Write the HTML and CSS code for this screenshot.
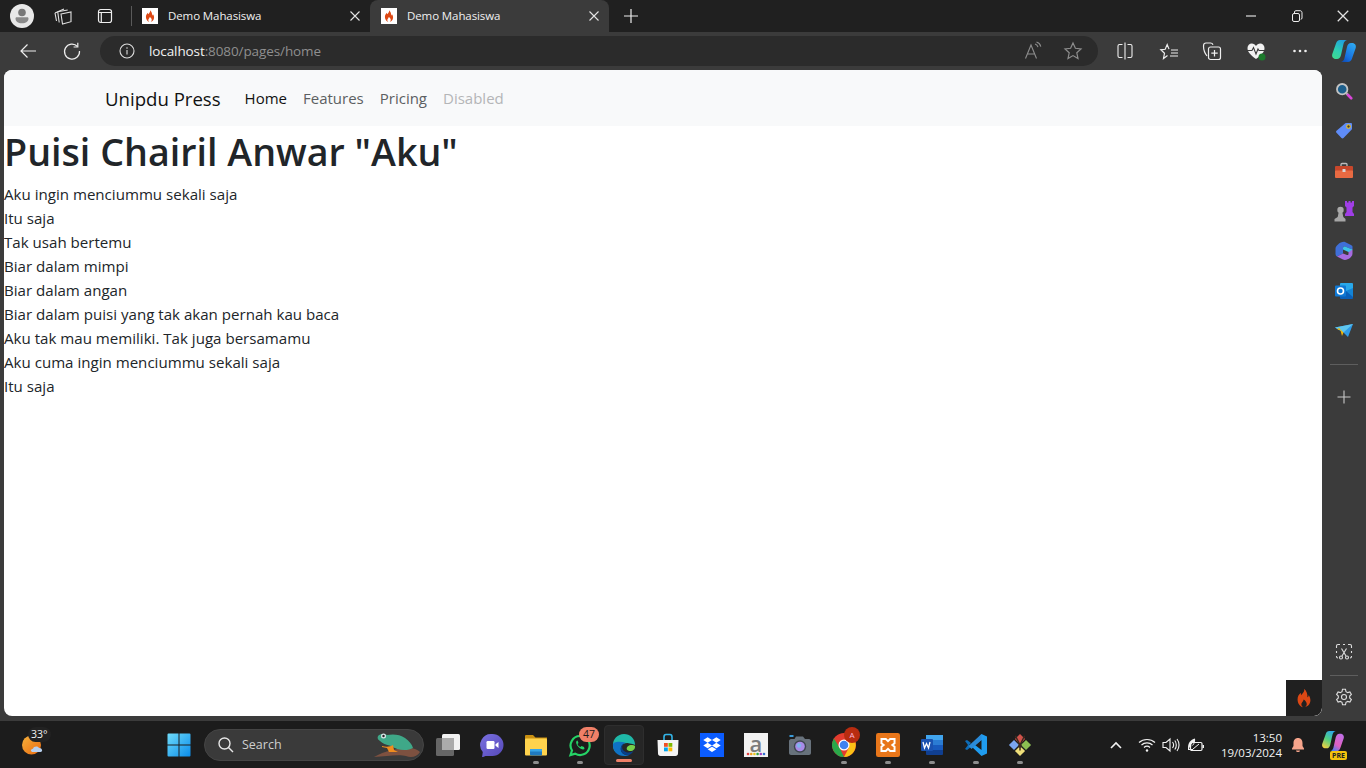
FILE: index.html
```html
<!DOCTYPE html>
<html lang="id">
<head>
<meta charset="utf-8">
<title>Demo Mahasiswa</title>
<link rel="stylesheet" href="styles.css">
</head>
<body>
<svg class="defs" width="0" height="0" aria-hidden="true">
  <defs>
    <linearGradient id="gLeft" x1="0.700" y1="0" x2="0.200" y2="1"><stop offset="0" stop-color="#1f9fe0"/><stop offset="0.600" stop-color="#2fd0b0"/><stop offset="1" stop-color="#3fd890"/></linearGradient>
    <linearGradient id="gRight" x1="0.800" y1="0" x2="0.200" y2="1"><stop offset="0" stop-color="#2ea8f0"/><stop offset="0.700" stop-color="#1670e0"/><stop offset="1" stop-color="#0f4fb8"/></linearGradient>
    <linearGradient id="gPreL" x1="0.700" y1="0" x2="0.200" y2="1"><stop offset="0" stop-color="#2fa8e8"/><stop offset="0.500" stop-color="#52d080"/><stop offset="1" stop-color="#f4d040"/></linearGradient>
    <linearGradient id="gPreR" x1="0.800" y1="0" x2="0.200" y2="1"><stop offset="0" stop-color="#c070e8"/><stop offset="0.600" stop-color="#e060c0"/><stop offset="1" stop-color="#4080f0"/></linearGradient>
    <linearGradient id="gMeet" x1="0" y1="0" x2="1" y2="1"><stop offset="0" stop-color="#7a70e0"/><stop offset="1" stop-color="#5548b8"/></linearGradient>
    <linearGradient id="gSun" x1="0" y1="0" x2="1" y2="1"><stop offset="0" stop-color="#f6b23c"/><stop offset="1" stop-color="#ea6a10"/></linearGradient>
    <linearGradient id="gStart" x1="0" y1="0" x2="1" y2="1"><stop offset="0" stop-color="#6fdcfa"/><stop offset="1" stop-color="#0a8cea"/></linearGradient>
  </defs>
  <symbol id="flame" viewBox="0 0 24 24"><path d="M12 2c1 3-1 4-3 7-.5-1-.6-1.600-.4-2.600C6 8.500 5 11 5 13.500 5 18 8 21.500 11 22c-2-1.500-2.500-3.500-1-5.500.6-.8 1.400-1.600 1.600-3 1.800 1 3.400 3 3.400 5 0 1.500-.6 2.700-2 3.500 3-.5 6-3.500 6-7.500 0-2.500-1-4.500-2-5.500 0 1-.3 1.800-1.300 2.300C16 8 15 4.500 12 2z" fill="#dd4814"/></symbol>
  <symbol id="x" viewBox="0 0 12 12"><path d="M1.500 1.500l9 9M10.500 1.500l-9 9" stroke="#e4e4e4" stroke-width="1.100" fill="none"/></symbol>
</svg>

<header class="tabstrip">
  <span class="strip-btn avatar-cell">
    <svg width="24" height="24" viewBox="0 0 24 24"><circle cx="12" cy="12" r="12" fill="#e8e8e8"/><circle cx="12" cy="8.500" r="3.800" fill="#777"/><path d="M5.500 14.500c0-.8.6-1.300 1.300-1.300h10.400c.7 0 1.300.5 1.300 1.300 0 2.800-2.500 4.800-6.500 4.800s-6.500-2-6.500-4.800z" fill="#8a8a8a"/></svg>
  </span>
  <span class="strip-btn">
    <svg width="20" height="20" viewBox="0 0 20 20" fill="none" stroke="#e0e0e0" stroke-width="1.100"><path d="M8 8l10-2v9.700L9.500 18z"/><path d="M4.700 5.700l10-1.700M4.700 5.700L6.200 16.500"/><path d="M2 7l9-4M2 7l1.500 8"/></svg>
  </span>
  <span class="strip-btn">
    <svg width="20" height="20" viewBox="0 0 20 20" fill="none" stroke="#eee" stroke-width="1.200"><rect x="3.500" y="3.500" width="13" height="13" rx="2.200"/><path d="M3.500 6.500h13M6.300 6.500v10"/></svg>
  </span>
  <span class="strip-sep"></span>
  <div class="tab">
    <span class="favicon"><svg width="14" height="14"><use href="#flame"/></svg></span>
    <span class="tab-title">Demo Mahasiswa</span>
    <svg class="tab-x" width="12" height="12"><use href="#x"/></svg>
  </div>
  <div class="tab tab-active">
    <span class="favicon"><svg width="14" height="14"><use href="#flame"/></svg></span>
    <span class="tab-title">Demo Mahasiswa</span>
    <svg class="tab-x" width="12" height="12"><use href="#x"/></svg>
  </div>
  <span class="new-tab">
    <svg width="16" height="16" viewBox="0 0 16 16"><path d="M8 1v14M1 8h14" stroke="#eee" stroke-width="1.200"/></svg>
  </span>
  <div class="win-controls">
    <span class="win-btn"><svg width="12" height="12" viewBox="0 0 12 12"><path d="M1 6h10" stroke="#eee" stroke-width="1.100"/></svg></span>
    <span class="win-btn"><svg width="12" height="12" viewBox="0 0 12 12" fill="none" stroke="#eee"><rect x="1.500" y="3.500" width="7" height="8" rx="1.500"/><path d="M3.500 3V2c0-.8.5-1.300 1.300-1.300H9c1.200 0 2 .8 2 2V8c0 .8-.5 1.300-1.300 1.300"/></svg></span>
    <span class="win-btn"><svg width="14" height="14" viewBox="0 0 12 12"><use href="#x"/></svg></span>
  </div>
</header>

<nav class="toolbar">
  <span class="tool-btn tool-back">
    <svg width="20" height="20" viewBox="0 0 20 20" fill="none" stroke="#eee" stroke-width="1.200"><path d="M18 10H3M9.500 3.500L3 10l6.500 6.500"/></svg>
  </span>
  <span class="tool-btn">
    <svg width="20" height="20" viewBox="0 0 20 20" fill="none" stroke="#eee" stroke-width="1.200"><path d="M15.500 5.500A7.500 7.500 0 1 0 17.500 10"/><path d="M15.800 1.800v4.200h-4.200"/></svg>
  </span>
  <div class="address">
    <svg class="addr-info" width="16" height="16" viewBox="0 0 16 16" fill="none" stroke="#ddd" stroke-width="1.100"><circle cx="8" cy="8" r="7"/><path d="M8 7v4.500M8 4.300v1.400"/></svg>
    <span class="url"><span class="url-host">localhost</span>:8080/pages/home</span>
    <span class="addr-actions">
      <svg width="20" height="20" viewBox="0 0 20 20" fill="none" stroke="#8d8d8d" stroke-width="1.100"><path d="M2.500 17.500L8 4l5.500 13.500M4.500 13h7"/><path d="M12 3c1.600.5 2.600 1.600 3 3.200M13.500 1c2.400.7 3.800 2.300 4.300 4.700"/></svg>
      <svg width="20" height="20" viewBox="0 0 20 20" fill="none" stroke="#8d8d8d" stroke-width="1.200"><path d="M10 2l2.400 5.300 5.600.6-4.200 3.900 1.200 5.700-5-2.900-5 2.900 1.200-5.700L2 7.900l5.600-.6z"/></svg>
    </span>
  </div>
  <div class="tool-right">
    <span class="tool-btn tr-btn"><svg width="20" height="20" viewBox="0 0 20 20" fill="none" stroke="#eee" stroke-width="1.100"><path d="M7.500 3.500H4.500A1.500 1.500 0 0 0 3 5v10a1.500 1.500 0 0 0 1.500 1.500h3M12.500 3.500h3A1.500 1.500 0 0 1 17 5v10a1.500 1.500 0 0 1-1.500 1.500h-3M10 1.500v17"/></svg></span>
    <span class="tool-btn tr-btn"><svg width="20" height="20" viewBox="0 0 20 20" fill="none" stroke="#eee" stroke-width="1.200"><path d="M8.500 14.500L4.500 17.500l1-5.200L1.800 8.800l4.400-.5L8.200 3.500l1.800 4.600M12 9h7M12 12h7M11 15h8"/></svg></span>
    <span class="tool-btn tr-btn"><svg width="22" height="22" viewBox="0 0 22 22" fill="none" stroke="#eee" stroke-width="1.200"><path d="M6 16C4 13.500 2.500 10 2.500 6c0-2 1-3 2.500-3h4.500c1.200 0 2 .5 2.500 1.800"/><rect x="7.500" y="7" width="12" height="12.500" rx="2"/><path d="M13.500 10v6.500M10.300 13.200h6.400"/></svg></span>
    <span class="tool-btn tr-btn"><svg width="22" height="22" viewBox="0 0 22 22"><path d="M11 19C5 14.500 2.500 12 2.500 8c0-2.500 2-4.500 4.300-4.500 1.800 0 3.300 1 4.200 2.500.9-1.500 2.400-2.500 4.200-2.500 2.300 0 4.300 2 4.300 4.500 0 4-2.500 6.500-8.500 11z" fill="#f2f2f2"/><path d="M2 10.500h5l1.500-3 2.500 6.500 2-5 1 1.500h6" fill="none" stroke="#3b3b3b" stroke-width="1.100"/><circle cx="17" cy="17" r="3.500" fill="#1c7a2c"/></svg></span>
    <span class="tool-btn tr-btn"><svg width="18" height="6" viewBox="0 0 18 6" fill="#eee"><circle cx="3.500" cy="3" r="1.300"/><circle cx="9" cy="3" r="1.300"/><circle cx="14.500" cy="3" r="1.300"/></svg></span>
    <span class="tool-btn tr-btn"><svg width="26" height="26" viewBox="0 0 26 26"><path d="M9 2h7c-2 .5-3 2-3.500 4L10 17c-.6 2.500-2 4-4 4H5c-3 0-4.500-2.500-3.700-5L5 5.500C5.700 3.300 7 2 9 2z" fill="url(#gLeft)"/><path d="M17 24h-7c2-.5 3-2 3.500-4L16 9c.6-2.500 2-4 4-4h1c3 0 4.500 2.500 3.700 5L21 20.500C20.300 22.700 19 24 17 24z" fill="url(#gRight)"/></svg></span>
  </div>
</nav>

<div class="workspace">
  <div class="viewport">
    <div class="navbar">
      <a class="brand">Unipdu Press</a>
      <a class="nav-link nav-current">Home</a>
      <a class="nav-link">Features</a>
      <a class="nav-link">Pricing</a>
      <a class="nav-link nav-disabled">Disabled</a>
    </div>
    <h1 class="title">Puisi Chairil Anwar "Aku"</h1>
    <p class="poem">Aku ingin menciummu sekali saja<br>Itu saja<br>Tak usah bertemu<br>Biar dalam mimpi<br>Biar dalam angan<br>Biar dalam puisi yang tak akan pernah kau baca<br>Aku tak mau memiliki. Tak juga bersamamu<br>Aku cuma ingin menciummu sekali saja<br>Itu saja</p>
    <span class="debug-btn"><svg width="22" height="22"><use href="#flame"/></svg></span>
  </div>
  <aside class="sidebar">
    <span class="side-btn"><svg width="18" height="18" viewBox="0 0 20 20"><circle cx="8" cy="8" r="5.800" fill="#1d5f8c" stroke="#c4c4c4" stroke-width="2"/><path d="M12.500 12.500l2 2" stroke="#bbb" stroke-width="2.500"/><path d="M14.500 14.500l3.500 3.500" stroke="#d946d8" stroke-width="3" stroke-linecap="round"/></svg></span>
    <span class="side-btn"><svg width="20" height="20" viewBox="0 0 20 20"><path d="M11 2.500c.5-.5 1-.5 1.500-.5H17a1 1 0 0 1 1 1v4.500c0 .5-.2 1-.5 1.300l-8 8.200c-.6.600-1.400.6-2 0L2.500 11.800c-.6-.6-.6-1.400 0-2z" fill="#5f8cf7"/><circle cx="14.500" cy="5.500" r="1.800" fill="#3b3b3b" stroke="#f5c518" stroke-width="1.100"/></svg></span>
    <span class="side-btn"><svg width="20" height="20" viewBox="0 0 20 20"><path d="M7 5V3.500c0-.5.500-1 1-1h4c.5 0 1 .5 1 1V5" fill="none" stroke="#bdbdbd" stroke-width="1.300"/><rect x="1" y="5" width="18" height="5" rx="1" fill="#c8472b"/><path d="M1 9.500h18V16a1 1 0 0 1-1 1H2a1 1 0 0 1-1-1z" fill="#e86a42"/><rect x="8.500" y="8" width="3" height="3" rx=".6" fill="#d8d8d8"/></svg></span>
    <span class="side-btn"><svg width="22" height="22" viewBox="0 0 22 22"><circle cx="7.500" cy="10" r="3.200" fill="#aaa"/><path d="M5.500 13h4l.8 4 2.200 2v2.500H1.500V19l3.200-2z" fill="#a6a6a6"/><path d="M12 1h2v1.500h1.500V1h2v1.500H19V1h2v5l-1.500 1.500V12l1.500 2v2h-9v-2l1.500-2V7.500L12 6z" fill="#a03ee6"/></svg></span>
    <span class="side-btn"><svg width="20" height="20" viewBox="0 0 20 20"><path d="M4 3.500C6 1.500 9 .5 11 1l6 3c1 .5 1.500 1 1.500 2v2.500L11 5.500c-1-.3-2 .2-2 1.500v5.500l-6 3c-.8-.6-1.500-1.500-1.500-2.500V7.500C1.500 6 2.500 5 4 3.500z" fill="#3f6fd8"/><path d="M18.500 8.500v4c0 2-1 3-2.500 4.500-2 1.500-5 2.500-7 1.500l-6-3 6-3 4 1.500c1 .3 1.500-.3 1.500-1V8z" fill="#a66be0"/><path d="M9 7c0-1 1-1.800 2-1.500l7.500 3-4 2.500L9 8.500z" fill="#3dc4e8"/></svg></span>
    <span class="side-btn"><svg width="20" height="20" viewBox="0 0 20 20"><rect x="6" y="2" width="13" height="14" rx="1" fill="#28a8ea"/><path d="M6 10h13v7a1 1 0 0 1-1 1H7a1 1 0 0 1-1-1z" fill="#0a5fb8"/><path d="M12 10l7-3v9z" fill="#1484d6"/><rect x="1" y="4.500" width="11" height="11" rx="1" fill="#0f78d4"/><circle cx="6.500" cy="10" r="3" fill="none" stroke="#fff" stroke-width="1.600"/></svg></span>
    <span class="side-btn"><svg width="20" height="20" viewBox="0 0 20 20"><path d="M1 6.500L19 3l-5 13-4.500-4.500z" fill="#2f9be8"/><path d="M1 6.500l8.500 5 9.500-8.500z" fill="#5ec6ef"/><path d="M5 7l4.500 4.500L8 15 6.500 9.500 3 8z" fill="#f2b705"/></svg></span>
    <span class="side-sep"></span>
    <span class="side-btn"><svg width="16" height="16" viewBox="0 0 16 16"><path d="M8 1.500v13M1.500 8h13" stroke="#c8c8c8" stroke-width="1.100"/></svg></span>
    <span class="side-grow"></span>
    <span class="side-btn side-low"><svg width="18" height="18" viewBox="0 0 18 18" fill="none" stroke="#ddd" stroke-width="1.100"><path d="M1.500 5V3c0-.8.700-1.500 1.500-1.500h2M8 1.500h2M13 1.500h2c.8 0 1.500.7 1.500 1.500v2M16.500 8v2M1.500 8v2M1.500 13v.5c0 .8.700 1.500 1.500 1.500M16.500 13v.5c0 .8-.7 1.500-1.500 1.500"/><path d="M6.500 5.500L11 13M11.500 5.500L7 13"/><circle cx="6" cy="14.500" r="1.500"/><circle cx="12" cy="14.500" r="1.500"/></svg></span>
    <span class="side-sep side-sep-low"></span>
    <span class="side-btn side-gear"><svg width="18" height="18" viewBox="0 0 18 18" fill="none" stroke="#ddd" stroke-width="1.100"><circle cx="9" cy="9" r="2.500"/><path d="M7.500 1.300h3l.5 2.300 1.700 1 2.200-.7 1.500 2.600-1.700 1.600v1.800l1.700 1.600-1.500 2.600-2.200-.7-1.700 1-.5 2.300h-3l-.5-2.300-1.700-1-2.200.7-1.500-2.600 1.700-1.600V8.100L1.600 6.500l1.500-2.600 2.200.7 1.700-1z"/></svg></span>
  </aside>
</div>

<footer class="taskbar">
  <div class="weather">
    <svg width="30" height="30" viewBox="0 0 30 30"><circle cx="12.500" cy="16" r="9.500" fill="url(#gSun)"/><path d="M14 23c-2.500 0-3-3 0-3.300.5-2.400 4.500-3 6-.7 3-.5 4.500 3.700 1.500 4z" fill="#b8d0ee"/></svg>
    <span class="temp">33°</span>
  </div>
  <span class="task-icon task-start">
    <svg width="24" height="24" viewBox="0 0 24 24"><path d="M.5 1.500a1 1 0 0 1 1-1h10v11H.5zM12.500.5h10a1 1 0 0 1 1 1v10h-11zM.5 12.500h11v11h-10a1 1 0 0 1-1-1zM12.500 12.500h11v10a1 1 0 0 1-1 1h-10z" fill="url(#gStart)"/></svg>
  </span>
  <div class="search">
    <svg width="18" height="18" viewBox="0 0 18 18" fill="none" stroke="#e6e6e6" stroke-width="1.400"><circle cx="7.500" cy="7.500" r="5.500"/><path d="M11.500 11.500l4.500 4.500"/></svg>
    <span class="search-text">Search</span>
    <svg class="frog" width="48" height="28" viewBox="0 0 48 28"><path d="M1 26c10-6 25-9 35-9 5 0 9 2 11 4-3 5-9 6-14 4-6-2-20 0-32 1z" fill="#7d5140"/><path d="M5 5c3-3 6-2 9-1 5-1 13-1 18 3 4 3 7 6 8 10-5 3-15 3-22-2-5-1-9-3-11-5-2-1-3-3-2-5z" fill="#3fa888"/><path d="M9 15c4 1 8 1 11-1l1 5 4 2h-9l-2-4-5-1z" fill="#f08c1e"/><circle cx="10.500" cy="5" r="2.500" fill="#dfe8ea"/><circle cx="10.500" cy="5" r="1.200" fill="#222"/></svg>
  </div>
  <span class="task-icon">
    <svg width="24" height="24" viewBox="0 0 24 24"><rect x="0" y="5" width="18" height="18" rx="1.500" fill="#666"/><rect x="6" y="1" width="18" height="16" rx="1.500" fill="#f2f2f2"/><rect x="6" y="5" width="12" height="12" fill="#ababab"/></svg>
  </span>
  <span class="task-icon">
    <svg width="24" height="24" viewBox="0 0 24 24"><path d="M12.500 1a11 11 0 0 1 0 22H5.500L2 24.500l.8-5.500A11 11 0 0 1 12.500 1z" fill="url(#gMeet)"/><rect x="6.500" y="8" width="8" height="8" rx="1.200" fill="#fff"/><path d="M15.500 11.200L18.500 9v6l-3-2.200z" fill="#fff"/></svg>
  </span>
  <span class="task-icon task-open">
    <svg width="24" height="24" viewBox="0 0 24 24"><path d="M1 3a1 1 0 0 1 1-1h7l2.500 2.500H23V9H1z" fill="#c99012"/><rect x="1" y="5.500" width="22" height="17" rx="1" fill="#ffd34d"/><rect x="6" y="16" width="12" height="6.500" rx="1" fill="#1f7ac0"/><rect x="6" y="16" width="12" height="2.500" fill="#37a5e8"/></svg>
  </span>
  <span class="task-icon task-open">
    <svg width="24" height="24" viewBox="0 0 24 24" fill="none"><path d="M12 3a9.500 9.500 0 0 0-8 14.500L2.500 22l4.700-1.400A9.500 9.500 0 1 0 12 3z" stroke="#25d366" stroke-width="2.200"/><path d="M8.500 8c-1 1.500 0 4 2 6s4.500 3 6 2l-.5-2-2.500-1-1 1c-1.500-.5-2.500-1.500-3-3l1-1-1-2.500z" fill="#25d366"/></svg>
    <span class="badge badge-count">47</span>
  </span>
  <span class="task-icon task-active">
    <svg width="24" height="24" viewBox="0 0 26 26"><path d="M13 1C6 1 1 6.500 1 13c0 3 1 6 3 8 2-7 8-11 14-10 4 .5 7 1.500 7 2C25 6 19.500 1 13 1z" fill="#1fb8a8"/><path d="M1 13c0 7 5 12 12 12 2 0 4-.5 5.500-1.200-3 .5-9-.8-9-6.800 0-2.500 2-5.500 5.500-6.500C8.500 9 1 9 1 13z" fill="#0f72c4"/><path d="M25 14.500c0 3-2.500 5-5 5-2 0-3.500-1-4-2-.5-3 3-5 6-4.500 2 .3 3 1 3 1.500z" fill="#74d04a"/><path d="M9.500 17c0 4 3 7 9 6.800 2-1 4-2.500 5-4.500-2 1.500-5 2.500-8 1.500C12.500 20 11 18 11 15c0-1.500 1-3 2.500-4-2.500.5-4 3.500-4 6z" fill="#083f8a"/></svg>
  </span>
  <span class="task-icon">
    <svg width="24" height="24" viewBox="0 0 24 24"><path d="M8 7V4c0-1.500.8-2.500 2-2.500h4c1.200 0 2 1 2 2.500v3" fill="none" stroke="#33b5e8" stroke-width="1.600"/><path d="M1.500 7h21l-.5 13.500c0 1.500-1 2.500-2.500 2.500h-15C3 23 2 22 2 20.500z" fill="#f4f4f4"/><rect x="8" y="10" width="3.800" height="3.800" fill="#f25022"/><rect x="12.500" y="10" width="3.800" height="3.800" fill="#7fba00"/><rect x="8" y="14.500" width="3.800" height="3.800" fill="#00a4ef"/><rect x="12.500" y="14.500" width="3.800" height="3.800" fill="#ffb900"/></svg>
  </span>
  <span class="task-icon">
    <svg width="24" height="24" viewBox="0 0 22 22"><rect width="22" height="22" fill="#0b5cff"/><path d="M7 4l4 2.500L7 9 3 6.500zM15 4l4 2.500L15 9l-4-2.500zM7 9l4 2.500L7 14l-4-2.500zM15 9l4 2.500L15 14l-4-2.500zM7 15l4-2.500 4 2.500-4 2.500z" fill="#fff"/></svg>
  </span>
  <span class="task-icon">
    <span class="amz"><span class="amz-a">a</span><svg class="amz-dots" width="20" height="4" viewBox="0 0 20 4"><circle cx="2" cy="2" r="1.300" fill="#e04040"/><circle cx="5.200" cy="2" r="1.300" fill="#f0a020"/><circle cx="8.400" cy="2" r="1.300" fill="#e8c820"/><circle cx="11.600" cy="2" r="1.300" fill="#30a040"/><circle cx="14.800" cy="2" r="1.300" fill="#a040c0"/><circle cx="18" cy="2" r="1.300" fill="#3070d0"/></svg></span>
  </span>
  <span class="task-icon">
    <svg width="24" height="24" viewBox="0 0 24 24"><path d="M1 8c0-1 1-2 2-2h3.500l1.500-2.500h7L17 6h4c1 0 2 1 2 2v12c0 1-1 2-2 2H3c-1 0-2-1-2-2z" fill="#68727c"/><rect x="1.500" y="2" width="4" height="2" fill="#3a9ad8"/><circle cx="12" cy="13.500" r="6.200" fill="#3e4650"/><circle cx="12" cy="13.500" r="4.800" fill="#a88be8"/><circle cx="11" cy="12.500" r="2.200" fill="#7fb4ee"/></svg>
  </span>
  <span class="task-icon task-open">
    <svg width="24" height="24" viewBox="0 0 24 24"><circle cx="12" cy="12" r="12" fill="#e33b2e"/><path d="M12 24A12 12 0 0 1 2 5.500L8 15.500 12 24z" fill="#2aa84a"/><path d="M22.700 7A12 12 0 0 1 12 24l5-9.500L12 7z" fill="#fbc116"/><circle cx="12" cy="12" r="5.500" fill="#fff"/><circle cx="12" cy="12" r="4.300" fill="#3d82f0"/></svg>
    <span class="badge badge-chrome">A</span>
  </span>
  <span class="task-icon task-open">
    <svg width="24" height="24" viewBox="0 0 22 22"><rect width="22" height="22" rx="2" fill="#e8761a"/><path d="M5 5.500h4l2 2 2-2h4v4l-2 1.500 2 1.500v4h-4l-2-2-2 2H5v-4l2-1.500-2-1.500z" fill="none" stroke="#fff" stroke-width="1.800"/></svg>
  </span>
  <span class="task-icon task-open">
    <svg width="24" height="24" viewBox="0 0 24 24"><path d="M6 2h17v5H6z" fill="#41a5ee"/><path d="M6 7h17v5H6z" fill="#2b7cd3"/><path d="M6 12h17v5H6z" fill="#185abd"/><path d="M6 17h17v4a1 1 0 0 1-1 1H7a1 1 0 0 1-1-1z" fill="#103f91"/><rect x="1" y="6" width="12" height="12" rx="1" fill="#1a52b0"/><path d="M3 9l1.500 6L6.500 10.500 8.500 15 10 9" fill="none" stroke="#fff" stroke-width="1.300"/></svg>
  </span>
  <span class="task-icon task-open">
    <svg width="24" height="24" viewBox="0 0 24 24"><path d="M17.500 1L23 3.500v17L17.500 23 7 13zM17.500 7L11 12l6.500 5z" fill="#1f9cf0" fill-rule="evenodd"/><path d="M1 8l2-1 4 3-2 2 2 2-4 3-2-1 3-4z" fill="#0c6cb8"/><path d="M17.500 1l-13 12 3 3L17.500 7z" fill="#2a8ad8"/></svg>
  </span>
  <span class="task-icon task-open">
    <svg width="24" height="24" viewBox="0 0 26 26"><path d="M13 1l5.500 5.500-5.500 6-5.500-6z" fill="#d0524a"/><path d="M6.500 7.500l5.500 5.500-5.500 5.500L1 13z" fill="#7aa5f0"/><path d="M19.500 7.500L25 13l-5.500 5.500L14 13z" fill="#8cbe52"/><path d="M13 14l5.500 5.500L13 25l-5.500-5.500z" fill="#efdf7a"/><path d="M8 3l5 10 5-10M13 13v6" fill="none" stroke="#3a2a20" stroke-width="1.600"/><circle cx="13" cy="14" r="2" fill="#3a2a20"/></svg>
  </span>
  <div class="tray">
    <span class="tray-icon tray-chevron"><svg width="14" height="10" viewBox="0 0 14 10" fill="none" stroke="#f2f2f2" stroke-width="1.600"><path d="M2 8l5-5 5 5"/></svg></span>
    <span class="tray-icon"><svg width="18" height="16" viewBox="0 0 18 16" fill="none" stroke="#f2f2f2" stroke-width="1.200"><path d="M1 5.500c4.500-4 11.500-4 16 0M3.500 8c3-2.800 8-2.800 11 0M6 10.500c1.700-1.500 4.300-1.500 6 0"/><circle cx="9" cy="13.500" r="1.200" fill="#f2f2f2" stroke="none"/></svg></span>
    <span class="tray-icon"><svg width="18" height="16" viewBox="0 0 18 16" fill="none" stroke="#f2f2f2" stroke-width="1.100"><path d="M1 5.500h3L8 2v12L4 10.500H1z"/><path d="M10.500 5c1.300 1.700 1.300 4.300 0 6M12.800 3.500c2 2.500 2 6.500 0 9M15 2c2.700 3.500 2.700 8.500 0 12"/></svg></span>
    <span class="tray-icon tray-battery"><svg width="18" height="16" viewBox="0 0 18 16"><rect x="3.500" y="5.500" width="11.500" height="8" rx="1.200" fill="none" stroke="#f2f2f2" stroke-width="1.200"/><rect x="15.500" y="8" width="1.500" height="3" fill="#f2f2f2"/><path d="M1 11C1 6 3.500 2.500 8 1.500c.5 3.500-.5 7-4.500 8 1.500-1 3-2.500 3.500-4.500C4.500 6.500 3 9 2 12H6v1H1z" fill="#f2f2f2"/><path d="M6 12l6-5" stroke="#f2f2f2"/></svg></span>
  </div>
  <div class="clock"><span>13:50</span><span>19/03/2024</span></div>
  <span class="bell"><svg width="16" height="16" viewBox="0 0 16 16" fill="#f7a58c"><path d="M8 1c-3 0-4.500 2.300-4.500 5v3L2 11.500v1h12v-1L12.500 9V6C12.500 3.300 11 1 8 1z"/><path d="M6 13.500h4c0 2-4 2-4 0z"/></svg></span>
  <span class="copilot">
    <svg width="24" height="22" viewBox="0 0 26 24"><path d="M9 1h7c-2 .5-3 2-3.500 4L10 16c-.6 2.500-2 4-4 4H5c-3 0-4.500-2.500-3.700-5L5 4.500C5.700 2.300 7 1 9 1z" fill="url(#gPreL)"/><path d="M17 23h-7c2-.5 3-2 3.500-4L16 8c.6-2.500 2-4 4-4h1c3 0 4.500 2.500 3.700 5L21 19.500C20.300 21.700 19 23 17 23z" fill="url(#gPreR)"/></svg>
    <span class="pre">PRE</span>
  </span>
</footer>
</body>
</html>
```
FILE: styles.css
```css
* { box-sizing: border-box; }
html, body { margin: 0; height: 100%; }
body {
  width: 1366px;
  height: 768px;
  overflow: hidden;
  background: #3b3b3b;
  display: flex;
  flex-direction: column;
  font-family: "Open Sans", "Noto Sans", sans-serif;
}
.defs { display: block; height: 0; }

/* tab strip */
.tabstrip {
  height: 32px;
  background: #202020;
  display: flex;
  align-items: center;
  color: #f0f0f0;
  flex: none;
}
.strip-btn { width: 42px; height: 32px; display: flex; align-items: center; justify-content: center; flex: none; }
.avatar-cell { padding-left: 2px; }
.strip-sep { width: 1px; height: 20px; background: #5a5a5a; margin-left: 5px; flex: none; }
.tab {
  width: 238px;
  height: 32px;
  display: flex;
  align-items: center;
  padding: 0 9px 0 10px;
  flex: none;
}
.tab-active { background: #3b3b3b; border-radius: 8px 8px 0 0; width: 239px; padding-left: 11px; }
.favicon {
  width: 16px; height: 16px; background: #fff;
  display: flex; align-items: center; justify-content: center; flex: none;
}
.tab-title { font-size: 11.500px; margin: 0 0 2px 10px; flex: 1; white-space: nowrap; letter-spacing: -0.1px; }
.tab-x { flex: none; }
.new-tab { width: 44px; display: flex; justify-content: center; }
.win-controls { margin-left: auto; display: flex; }
.win-btn { width: 46px; height: 32px; display: flex; align-items: center; justify-content: center; }

/* toolbar */
.toolbar {
  height: 38px;
  padding: 4px 0;
  background: #3b3b3b;
  display: flex;
  align-items: center;
  flex: none;
}
.tool-btn { width: 44px; height: 30px; display: flex; align-items: center; justify-content: center; flex: none; }
.tool-back { margin-left: 6px; }
.address {
  width: 998px;
  height: 30px;
  margin-left: 6px;
  background: #2b2b2b;
  border-radius: 15px;
  display: flex;
  align-items: center;
  padding-left: 19px;
  flex: none;
}
.url { margin-left: 14px; font-size: 13.500px; color: #8f8f8f; letter-spacing: -0.1px; }
.url-host { color: #f2f2f2; }
.addr-actions { margin-left: auto; margin-right: 15px; display: flex; gap: 20px; }
.tool-right { display: flex; margin-left: 5px; }
.tr-btn { width: 43.800px; }

/* workspace */
.workspace { height: 646px; display: flex; flex: none; }
.viewport {
  width: 1318px;
  margin-left: 4px;
  background: #fff;
  border-radius: 8px;
  position: relative;
  overflow: hidden;
  color: #212529;
  font-size: 15.100px;
}
.navbar {
  height: 56px;
  background: #f8f9fa;
  display: flex;
  align-items: center;
  padding-left: 101px;
}
.brand { font-size: 18.600px; color: #111; margin-right: 16px; }
.nav-link { padding: 0 8px; color: #5c5f62; font-size: 15px; }
.nav-current { color: #111; }
.nav-disabled { color: #b4b5b7; }
.title { margin: 2px 0 6px; font-size: 37.650px; font-weight: 600; line-height: 48px; }
.poem { margin: 0; line-height: 24px; }
.debug-btn {
  position: absolute;
  right: 0; bottom: 0;
  width: 36px; height: 36px;
  background: #202020;
  border-radius: 0 0 8px 0;
  display: flex; align-items: center; justify-content: center;
}

/* sidebar */
.sidebar { width: 44px; display: flex; flex-direction: column; align-items: center; padding-top: 1px; flex: none; }
.side-btn { width: 44px; height: 40px; display: flex; align-items: center; justify-content: center; flex: none; }
.side-sep { width: 28px; height: 1px; background: #5e5e5e; margin: 13px 0 12px; flex: none; }
.side-grow { flex: 1; }
.side-low { height: 32px; }
.side-sep-low { margin: 7px 0 2px; }
.side-gear { height: 38px; }

/* taskbar */
.taskbar {
  margin-top: 5px;
  height: 47px;
  background: #1c1c1c;
  display: flex;
  align-items: center;
  color: #f2f2f2;
  flex: none;
}
.weather { width: 157px; height: 47px; position: relative; flex: none; padding: 8px 0 0 19px; }
.temp {
  position: absolute; left: 28px; top: 6px;
  background: #222; border-radius: 9px; padding: 0 3px;
  font-size: 10.500px; line-height: 15px;
}
.task-icon {
  width: 44px; height: 44px;
  display: flex; align-items: center; justify-content: center;
  position: relative; flex: none;
}
.task-start { margin-right: 3px; }
.search {
  width: 220px; height: 32px;
  margin-right: 2px;
  background: #3a3a3a;
  border-radius: 16px;
  display: flex; align-items: center;
  padding: 0 2px 0 12px;
  flex: none;
  border: 1px solid #454545;
}
.search-text { font-size: 12.500px; color: #cfcfcf; margin-left: 7px; }
.frog { margin-left: auto; }
.task-open::after {
  content: "";
  position: absolute; left: 19px; bottom: 3px;
  width: 6px; height: 3px; border-radius: 2px; background: #8d8d8d;
}
.task-active {
  width: 40px; height: 40px; margin: 0 2px;
  background: #262626; border-radius: 4px; border: 1px solid #2e2e2e;
}
.task-active::after {
  content: "";
  position: absolute; left: 11px; bottom: 2px;
  width: 16px; height: 3px; border-radius: 2px; background: #f08068;
}
.badge {
  position: absolute;
  display: flex; align-items: center; justify-content: center;
  border-radius: 9px;
  font-size: 10.500px;
}
.badge-count { left: 21px; top: 4px; width: 20px; height: 15px; background: #f08068; color: #1c1c1c; }
.badge-chrome { left: 22px; top: 4px; width: 16px; height: 16px; border-radius: 50%; background: #b82c10; color: #fbd; font-size: 8px; }
.amz {
  width: 24px; height: 24px; background: #f2f2f2;
  display: flex; flex-direction: column; align-items: center;
  position: relative;
}
.amz-a { font-size: 22px; line-height: 20px; height: 20px; color: #7b7b7b; font-weight: 600; }
.amz-dots { position: absolute; bottom: 1px; left: 2px; }
.tray { margin-left: auto; display: flex; align-items: center; }
.tray-icon { width: 24px; display: flex; justify-content: center; flex: none; }
.tray-chevron { margin-right: 7px; }
.tray-battery { margin-left: 1px; }
.clock {
  width: 72px; margin: 0 1px 0 2px;
  display: flex; flex-direction: column; align-items: flex-end;
  font-size: 11.500px; line-height: 15px;
}
.bell { width: 30px; margin-right: -2px; display: flex; justify-content: center; flex: none; }
.copilot { width: 44px; height: 30px; position: relative; display: flex; justify-content: center; margin-right: 11px; flex: none; }
.pre {
  position: absolute; right: 8px; bottom: 0;
  background: #f4c20d; color: #222; font-size: 7px; font-weight: 700;
  border-radius: 2px; padding: 0 2px; line-height: 9px;
}
```
